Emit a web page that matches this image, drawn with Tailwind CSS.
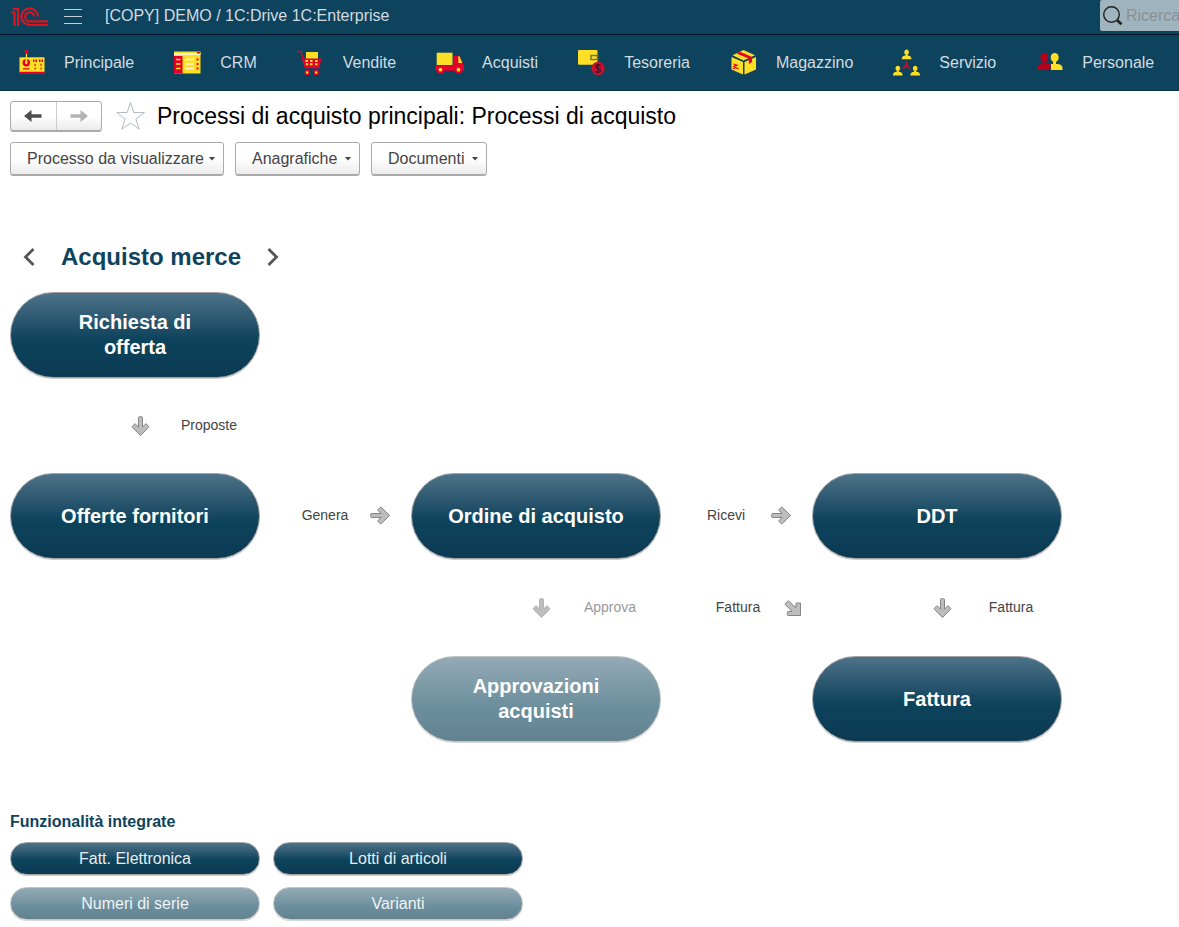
<!DOCTYPE html>
<html lang="it">
<head>
<meta charset="utf-8">
<meta name="viewport" content="width=device-width, initial-scale=1">
<title>1C:Drive – Processi di acquisto</title>
<script src="https://cdn.jsdelivr.net/npm/@tailwindcss/browser@4"></script>
</head>
<body class="min-h-screen overflow-x-hidden bg-white font-['Liberation_Sans',Arial,sans-serif] text-base text-[#444]">

<svg class="hidden" aria-hidden="true">
  <defs>
    <symbol id="arrow" viewBox="0 0 20 20">
      <path d="M1.600 7.500h9.600L8.300 4.900q-.8-.8 0-1.600l1.600-1.700q.8-.8 1.600 0l8 7.800-8 8q-.8.8-1.600 0l-1.600-1.700q-.8-.8 0-1.600l2.900-2.600H1.600q-.9 0-.9-.9V8.400q0-.9.9-.9z" stroke-linejoin="round"/>
    </symbol>
  </defs>
</svg>

<header class="bg-[#0e435d] text-[#d3dbe0]">
  <div class="flex h-[35px] items-center border-b border-[#031529]">
    <a href="#" aria-label="1C" class="ml-[11px] block">
      <svg class="block h-5 w-[38px]" viewBox="0 0 38 20" fill="none" stroke="#dc1420" stroke-width="2.200">
        <path d="M.3 5.300h3.200V19M1.600 1.900h5.500V19"/>
        <path d="M27 9.500A8.300 8.300 0 1 0 18.700 18H37"/>
        <path d="M23.200 9.500A4.500 4.500 0 1 0 18.700 14.400H37"/>
      </svg>
    </a>
    <button type="button" aria-label="Menu" class="ml-[15px]">
      <svg class="block h-4 w-[18px]" viewBox="0 0 18 16" fill="#c5d0d6"><path d="M0 0h18v1H0zM0 7h18v1H0zM0 14h18v1H0z"/></svg>
    </button>
    <p class="ml-[23px] whitespace-nowrap pb-0.5 leading-5">[COPY] DEMO / 1C:Drive 1C:Enterprise</p>
    <label class="ml-auto flex h-[31px] w-[79px] items-center self-start overflow-hidden rounded-l-xs bg-[#9fb4bf]">
      <svg class="ml-[3px] h-5 w-5 shrink-0" viewBox="0 0 20 20" fill="none" stroke="#222"><circle cx="8.500" cy="8.500" r="7.800" stroke-width="1.400"/><path d="M14.200 14.200l4.300 4" stroke-width="2.800"/></svg>
      <input type="search" aria-label="Ricerca" placeholder="Ricerca" class="ml-[3px] w-20 shrink-0 bg-transparent text-[#444] outline-none placeholder:text-[#8b8f92]">
    </label>
  </div>
  <nav class="flex h-14 items-center gap-[38px] overflow-hidden whitespace-nowrap border-b border-[#0a3147] pl-4">
    <a href="#" class="flex items-center gap-4">
      <svg class="size-8" viewBox="0 0 32 32"><path d="M10.500 6v5" stroke="#ffdf26" stroke-width="1.200"/><circle cx="10.500" cy="4.800" r="2.100" fill="#e4002b"/><rect x="3.500" y="10.300" width="25" height="15" fill="#ffdf26"/><path d="M3.500 24.800h25v2.200h-25zM7 21.200h6.500v1.200H7z" fill="#e4002b"/><circle cx="10.300" cy="15.700" r="3.700" fill="#e4002b"/><path d="M10.300 11.500v4" stroke="#ffdf26" stroke-width="1.800"/><circle cx="10.300" cy="15.700" r="1.300" fill="#ffdf26"/><g fill="#e4002b"><path d="M17 12.500h1.500V15H17zm2.500 0H21V15h-1.500zm3.500 0h1.500V15H23zm2.500 0H27V15h-1.500zM18.500 16.800h1.200v2.200h-1.200zm0 3.600h1.200v2.200h-1.200zM24.500 16.800h1.200v2.200h-1.200zm0 3.600h1.200v2.200h-1.200z"/></g></svg>
      Principale</a>
    <a href="#" class="flex items-center gap-4">
      <svg class="size-8" viewBox="0 0 32 32"><path d="M2 4.500h26.500V26.500H2z" fill="#ffdf26"/><path d="M2 6h26.500v2H2z" fill="#fff6c8"/><path d="M25 5h3v1.500h-3zM2 9h8.500v17.500H2z" fill="#e4002b"/><path d="M4 12.500h4.500M4 17h4.500M4 21.500h4.500" stroke="#ffdf26" stroke-width="1.500"/><path d="M13 12.500h9M13 17h9M13 21.500h9" stroke="#fff9d8" stroke-width="1.600"/><path d="M24.500 12.500h2M24.500 17h2M24.500 21.500h2" stroke="#e4002b" stroke-width="2.200"/></svg>
      CRM</a>
    <a href="#" class="flex items-center gap-4">
      <svg class="size-8" viewBox="0 0 32 32"><path d="M11 5h12v7H11z" fill="#ffdf26"/><path d="M2 4.500h4l4.500 16h14" fill="none" stroke="#e4002b" stroke-width="1.300"/><path d="M7 11.500h19.500L24.500 20H9.500z" fill="#e4002b"/><path d="M10.500 14h2.500M15 14h2.500M20 14h2.500M10.800 17.300h2.500M15 17.300h2.500M20 17.300h2.500" stroke="#ffdf26" stroke-width="1.900"/><g fill="#ffdf26" stroke="#e4002b" stroke-width="1.500"><circle cx="12.200" cy="25.500" r="2"/><circle cx="21.200" cy="25.500" r="2"/></g></svg>
      Vendite</a>
    <a href="#" class="flex items-center gap-4">
      <svg class="size-8" viewBox="0 0 32 32"><path d="M2.700 5.700h15.800V18H2.700z" fill="#ffdf26"/><path d="M1.300 18.500h17.700V8.700h6.500l3.500 7.800 1 1.500v5.800H1.300z" fill="#e4002b"/><path d="M24.300 9.200h1.200l2.800 6.800h-4z" fill="#ffdf26"/><g fill="#ffdf26" stroke="#e4002b" stroke-width="2"><circle cx="6.500" cy="22.700" r="2.900"/><circle cx="24.500" cy="22.700" r="2.900"/></g></svg>
      Acquisti</a>
    <a href="#" class="flex items-center gap-4">
      <svg class="size-8" viewBox="0 0 32 32"><rect x="2" y="3" width="19.500" height="14.700" rx="1" fill="#ffdf26"/><rect x="15" y="8.500" width="6.500" height="4" fill="none" stroke="#777432" stroke-width="1.500"/><circle cx="22" cy="21.500" r="6.700" fill="#c8102e"/><path d="M24.500 18.700q-2.500-1.700-4.300-.4-1.500 2 1.800 3.200 3.500 1 2 3.200-2.200 1.400-4.500-.4M22 17v9" fill="none" stroke="#48182e" stroke-width="1.500"/></svg>
      Tesoreria</a>
    <a href="#" class="flex items-center gap-4">
      <svg class="size-8" viewBox="0 0 32 32"><path d="M15.500 3 27 8.300 15.500 13.500 4.500 8.300zM3.500 10l11.500 5v12.500L3.500 22.500zM16.500 15l11.500-5v12.500l-11.500 5z" fill="#ffdf26"/><path d="m8.500 6.500 3.500-1.700 12 5.200v5l-3.200 2v-5.500z" fill="#e4002b"/><path d="m5.500 17 3.500 1.200-3 1.300 4.500 2.500m-5.500-1 2 1" fill="none" stroke="#e4002b" stroke-width="1.300"/></svg>
      Magazzino</a>
    <a href="#" class="flex items-center gap-4">
      <svg class="size-8" viewBox="0 0 32 32"><g fill="#ffdf26"><path id="person" d="M15.600 2.500a2.500 2.700 0 0 1 1 5.100v.9q3.900.3 3.900 3.800h-9.800q0-3.500 3.900-3.800v-.9a2.500 2.700 0 0 1 1-5.100z"/><use href="#person" x="-8.800" y="16.200"/><use href="#person" x="8.600" y="16.200"/></g><path d="M15.500 14.500v4.300l-4 2.800m4-2.800 3.800 2.800" fill="none" stroke="#c8102e" stroke-width="1.800"/></svg>
      Servizio</a>
    <a href="#" class="flex items-center gap-4">
      <svg class="size-8" viewBox="0 0 32 32"><g fill="#ffdf26"><ellipse cx="20.700" cy="10.500" rx="4" ry="4.500"/><path d="M17 17h7q4.500.8 4.500 4v2H17z"/><path d="M19 14h3v4h-3z"/></g><g fill="#b5001e"><ellipse cx="10.300" cy="10.500" rx="4" ry="4.500"/><path d="M16.500 17H7.500Q3 17.800 3 21v2h13.500z"/><path d="M8.500 14H12v4H8.500z"/></g></svg>
      Personale</a>
  </nav>
</header>

<main class="px-2.5 pt-2.5">
  <div class="flex items-center">
    <div class="flex h-[30px] w-[92px] divide-x divide-[#ccc] rounded-[3px] border border-[#aaa] bg-linear-to-b from-white from-50% to-[#ebebeb] shadow-[0_1px_0_#aaa]">
      <button type="button" aria-label="Indietro" class="flex flex-1 items-center justify-center"><svg class="h-3 w-[18px]" viewBox="0 0 18 12" fill="#4d4d4d"><path d="M0 6 7.500 0v4.300h10v3.400h-10V12z"/></svg></button>
      <button type="button" aria-label="Avanti" class="flex flex-1 items-center justify-center"><svg class="h-3 w-[18px]" viewBox="0 0 18 12" fill="#b3b3b3"><path d="m18 6-7.500-6v4.300H.5v3.400h10V12z"/></svg></button>
    </div>
    <button type="button" aria-label="Aggiungi ai preferiti" class="ml-3.5"><svg class="block h-[30px] w-[30px]" viewBox="0 0 30 30" fill="#fff" stroke="#b4bcc2"><path d="m14.500 1.500 3.300 10h10.700l-8.600 6.500 3.300 10.200-8.700-6.200-8.700 6.200L9.100 18 .8 11.500h10.400z"/></svg></button>
    <h1 class="ml-[11px] text-[23px] leading-[30px] text-black">Processi di acquisto principali: Processi di acquisto</h1>
  </div>

  <div class="mt-[11px] flex gap-[11px] whitespace-nowrap">
    <button type="button" class="flex h-[33px] w-[214px] items-center justify-between rounded-[3px] border border-[#aaa] bg-linear-to-b from-white from-50% to-[#ebebeb] pl-4 pr-2 shadow-[0_1px_0_#aaa]">Processo da visualizzare<svg class="h-1 w-1.5" viewBox="0 0 6 4" fill="#444"><path d="M0 0h6L3 3.500z"/></svg></button>
    <button type="button" class="flex h-[33px] w-[125px] items-center justify-between rounded-[3px] border border-[#aaa] bg-linear-to-b from-white from-50% to-[#ebebeb] pl-4 pr-2 shadow-[0_1px_0_#aaa]">Anagrafiche<svg class="h-1 w-1.5" viewBox="0 0 6 4" fill="#444"><path d="M0 0h6L3 3.500z"/></svg></button>
    <button type="button" class="flex h-[33px] w-[116px] items-center justify-between rounded-[3px] border border-[#aaa] bg-linear-to-b from-white from-50% to-[#ebebeb] pl-4 pr-2 shadow-[0_1px_0_#aaa]">Documenti<svg class="h-1 w-1.5" viewBox="0 0 6 4" fill="#444"><path d="M0 0h6L3 3.500z"/></svg></button>
  </div>

  <div class="mt-[67px] flex h-[30px] items-center gap-[26px] pl-[13px]">
    <button type="button" aria-label="Processo precedente"><svg class="block h-[18px] w-3" viewBox="0 0 12 18" fill="none" stroke="#555" stroke-width="2.800"><path d="M10.500 1 2.500 9l8 8"/></svg></button>
    <h2 class="text-2xl font-bold text-[#0e435d]">Acquisto merce</h2>
    <button type="button" aria-label="Processo successivo"><svg class="block h-[18px] w-3" viewBox="0 0 12 18" fill="none" stroke="#555" stroke-width="2.800"><path d="m1.500 1 8 8-8 8"/></svg></button>
  </div>

  <section aria-label="Diagramma del processo" class="mt-5 grid grid-cols-[250px_151px_250px_151px_250px] grid-rows-[86px_95px_86px_97px_86px] text-sm">
    <button type="button" class="col-start-1 row-start-1 rounded-full border border-[#a3a3a3] bg-linear-to-b from-[#4d7389] via-[#0d435c] via-55% to-[#0c3a53] px-[34px] text-xl leading-[25px] font-bold text-white shadow-[0_1px_0_#ccc]">Richiesta di offerta</button>

    <div class="col-start-1 row-start-2 flex items-center pl-[120px]">
      <svg class="size-5 shrink-0 rotate-90 fill-[#bdbdbd] stroke-[#858585]"><use href="#arrow"/></svg>
      <span class="w-[118px] shrink-0 pb-0.5 text-center">Proposte</span>
    </div>

    <button type="button" class="col-start-1 row-start-3 rounded-full border border-[#a3a3a3] bg-linear-to-b from-[#4d7389] via-[#0d435c] via-55% to-[#0c3a53] px-[34px] text-xl leading-[25px] font-bold text-white shadow-[0_1px_0_#ccc]">Offerte fornitori</button>
    <div class="col-start-2 row-start-3 flex items-center pl-5">
      <span class="w-[90px] pb-0.5 text-center">Genera</span>
      <svg class="size-5 fill-[#bdbdbd] stroke-[#858585]"><use href="#arrow"/></svg>
    </div>
    <button type="button" class="col-start-3 row-start-3 rounded-full border border-[#a3a3a3] bg-linear-to-b from-[#4d7389] via-[#0d435c] via-55% to-[#0c3a53] px-[34px] text-xl leading-[25px] font-bold text-white shadow-[0_1px_0_#ccc]">Ordine di acquisto</button>
    <div class="col-start-4 row-start-3 flex items-center pl-5">
      <span class="w-[90px] pb-0.5 text-center">Ricevi</span>
      <svg class="size-5 fill-[#bdbdbd] stroke-[#858585]"><use href="#arrow"/></svg>
    </div>
    <button type="button" class="col-start-5 row-start-3 rounded-full border border-[#a3a3a3] bg-linear-to-b from-[#4d7389] via-[#0d435c] via-55% to-[#0c3a53] px-[34px] text-xl leading-[25px] font-bold text-white shadow-[0_1px_0_#ccc]">DDT</button>

    <div class="col-start-3 row-start-4 flex items-center pl-[120px] text-[#999]">
      <svg class="size-5 shrink-0 rotate-90 fill-[#bdbdbd] stroke-[#b3b3b3]"><use href="#arrow"/></svg>
      <span class="w-[118px] shrink-0 pb-0.5 text-center">Approva</span>
    </div>
    <div class="col-start-4 row-start-4 flex items-center pl-8">
      <span class="w-[90px] pb-0.5 text-center">Fattura</span>
      <svg class="size-5 fill-[#bdbdbd] stroke-[#858585]" viewBox="0 0 20 20"><path d="M2.300 5.500 4.700 3.200q.6-.6 1.200 0l7 6.600V5.800q0-.8.8-.8h3.800v12.500H5.200q-.8 0-.8-.8v-2.400q0-.8.8-.8h3.900L2.300 6.700q-.6-.6 0-1.200z"/></svg>
    </div>
    <div class="col-start-5 row-start-4 flex items-center pl-[120px]">
      <svg class="size-5 shrink-0 rotate-90 fill-[#bdbdbd] stroke-[#858585]"><use href="#arrow"/></svg>
      <span class="w-[118px] shrink-0 pb-0.5 text-center">Fattura</span>
    </div>

    <button type="button" class="col-start-3 row-start-5 rounded-full border border-[#c2c4c5] bg-linear-to-b from-[#94aab6] via-[#6c8e9c] via-60% to-[#638290] px-[34px] text-xl leading-[25px] font-bold text-white shadow-[0_1px_0_#d8d8d8]">Approvazioni acquisti</button>
    <button type="button" class="col-start-5 row-start-5 rounded-full border border-[#a3a3a3] bg-linear-to-b from-[#4d7389] via-[#0d435c] via-55% to-[#0c3a53] px-[34px] text-xl leading-[25px] font-bold text-white shadow-[0_1px_0_#ccc]">Fattura</button>
  </section>

  <section class="mt-[68px]">
    <h3 class="font-bold leading-6 text-[#0e435d]">Funzionalità integrate</h3>
    <div class="mt-2 grid grid-cols-[250px_250px] gap-x-[13px] gap-y-3">
      <button type="button" class="h-[33px] rounded-full border border-[#a3a3a3] bg-linear-to-b from-[#4d7389] via-[#0d435c] via-55% to-[#0c3a53] text-[#e8edf0] shadow-[0_1px_0_#ccc]">Fatt. Elettronica</button>
      <button type="button" class="h-[33px] rounded-full border border-[#a3a3a3] bg-linear-to-b from-[#4d7389] via-[#0d435c] via-55% to-[#0c3a53] text-[#e8edf0] shadow-[0_1px_0_#ccc]">Lotti di articoli</button>
      <button type="button" class="h-[33px] rounded-full border border-[#c2c4c5] bg-linear-to-b from-[#94aab6] via-[#6c8e9c] via-60% to-[#638290] text-[#f0f3f5] shadow-[0_1px_0_#d8d8d8]">Numeri di serie</button>
      <button type="button" class="h-[33px] rounded-full border border-[#c2c4c5] bg-linear-to-b from-[#94aab6] via-[#6c8e9c] via-60% to-[#638290] text-[#f0f3f5] shadow-[0_1px_0_#d8d8d8]">Varianti</button>
    </div>
  </section>
</main>
</body>
</html>
